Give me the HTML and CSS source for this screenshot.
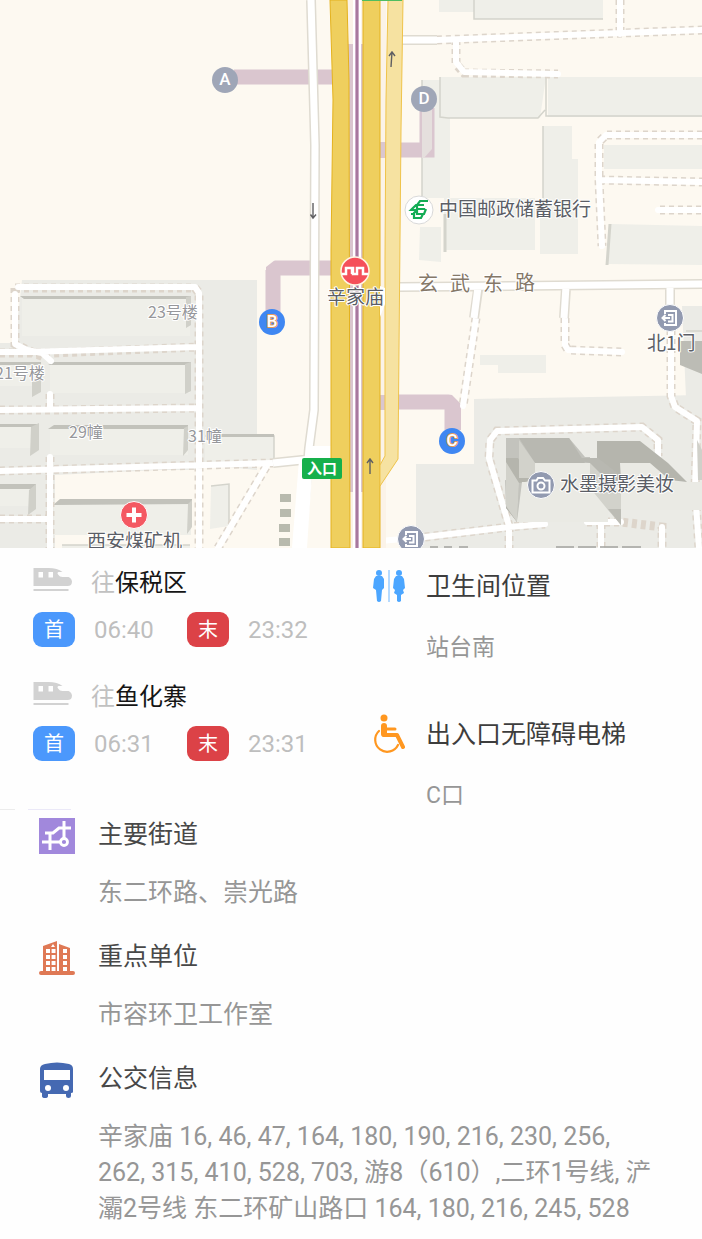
FILE: index.html
```html
<!DOCTYPE html>
<html lang="zh-CN">
<head>
<meta charset="utf-8">
<meta name="viewport" content="width=device-width, initial-scale=1">
<title>辛家庙</title>
<link rel="stylesheet" href="styles.css">
</head>
<body>
<svg class="symbols" aria-hidden="true">
  <symbol id="train" viewBox="0 0 39 24">
    <path fill="#d2d2d2" fill-rule="evenodd" d="M0 0H15Q24 0 29 4H25Q23 5 25 7Q26 9 29 9H35Q38 10 38.500 13.500Q38.500 18 34 18H0ZM5 4V9.500H9.500V4ZM15 4V9.500H19.500V4Z"/>
    <path stroke="#d2d2d2" stroke-width="2" d="M0 22H35"/>
  </symbol>
  <symbol id="gate" viewBox="0 0 28 28">
    <circle cx="14" cy="14" r="13.500" fill="#929ab0" stroke="#fff"/>
    <path fill="none" stroke="#fff" stroke-width="2" d="M9 10V7H20V21H9V19M12 11H16.500V17.500H12M6 14H14M9.500 11L6.500 14L9.500 17"/>
  </symbol>
</svg>

<main class="page">
<svg class="map" viewBox="0 0 702 548" role="img" aria-label="辛家庙站周边地图">
  <rect width="702" height="548" fill="#fdf9f1"/>

  <g fill="#ebebe6">
    <path d="M0 343H15L22 280H257V470L200 464V470H160L55 475V548H0Z"/>
    <path d="M474 399L702 395V548H416V464H474Z"/>
    <path d="M682 306H702V398H686Z"/>
  </g>
  <g fill="#efefe9">
    <path d="M439 0H474V12H439ZM474 0H603V19H474ZM422 80H440V118H450V198H422ZM440 77H546L540 118H440ZM548 77H702V117H548ZM543 126H572V159H578V254H540V210H543ZM444 198H535V250H444ZM420 227H441V262L419 260ZM604 145H702V169H604ZM611 224L702 226V265L607 264ZM480 355H546V373H498V365H480Z"/>
    <path d="M22 298H190V336H22ZM50 362H190V393H50ZM0 363H40V386H0ZM50 428H188V455H50ZM205 436H274V462H205ZM0 426H36V448H0ZM0 487H34V506H0ZM54 503H191V535H54ZM211 486L229 484V526L210 529ZM62 545H190V548H62Z"/>
  </g>
  <g fill="none" stroke="#d4d4cc" stroke-width="1.500">
    <path d="M474 0V19H603M440 77V117L448 118H538L545 110M546 77V116H702M543 126V198M422 80V196M686 331H702M205 436H274V461M211 486L229 484V526M62 545H190"/>
    <path stroke-width="3" d="M445 214V252M610 224L607 265"/>
  </g>
  <g fill="#c2c2bb">
    <path d="M20 296H191V299H24ZM48 365L54 362H191V365ZM0 362H41V365H0ZM48 429L54 425H188V429ZM0 424H39V427H0ZM0 484H36V489H0ZM53 505L60 499H192V504ZM205 434H274V437H222Z"/>
    <path fill="#d0d0c9" d="M186 297L191 296V325L186 328ZM185 364L191 362V391L185 394ZM32 380L41 375V392L32 397ZM184 428L188 426V450L183 456ZM31 427L39 423V450L30 456ZM29 490L36 484V509L28 515ZM188 504L192 500V527L187 534Z"/>
  </g>

  <g class="metro-passage">
    <path d="M234 77H335M273 312V268H335M380 150H427V108M380 402H452V430"/>
  </g>
  <path fill="#dac6cf" d="M457 397L461 402V430H450V397Z"/>
  <path fill="#e5dfdd" d="M422 108H432V149L424 158H422Z"/>
  <path fill="#fdf9f1" d="M445 393L452 395L463 406V393Z"/>
  <path fill="#fdf9f1" d="M264 260H275L266 267V270H264Z"/>

  <g class="lane-edge">
    <path d="M15 288H195L199 293V548M15 288V344L27 350L46 358M50 394V408M50 457V548M0 353H52L198 347M0 410H52L198 408M0 471L273 463M0 519H50M266 467L218 548"/>
    <path d="M437 40L702 30M620 0V34M456 40V64L464 73L558 74M702 135H606L599 142V180L602 246M600 180L702 182M660 210H702"/>
    <path d="M476 318L463 406M565 318V345L568 350L622 352M671 330V396L675 407L697 421L695 490L699 548M695 494H702"/>
    <path d="M509 526L489 458L490 440L497 431L642 427L658 440V456M425 537L509 527L545 524M587 522H621L662 527V548M509 527V548M601 524V548"/>
  </g>
  <g class="lane">
    <path d="M18 287H195L199 293V548M15 294V344L27 350L42 353L51 361M50 394V408M50 457V548M0 352H27L198 347M0 410L198 408M0 471L273 463M0 519H50M266 467L218 548"/>
    <path d="M437 40L702 30M620 0V34M456 40V62L464 72L558 74M702 135H606L599 142V180L602 246M600 180L702 182M658 210H702"/>
    <path d="M476 318L463 406M565 318V345L568 350L622 352M671 330V396L675 407L697 421L695 490L699 548M695 494H702"/>
    <path d="M509 526L489 458L490 440L497 431L642 427L658 440V456M380 541L425 537L509 527L545 524M587 522H621M509 527V548M601 524V548M662 527V548"/>
  </g>
  <g class="road-edge">
    <path d="M400 287L702 284M402 40H437M478 290L474 318M566 288L564 318M670 286V310M311 0L315 145L314 410L309 448L301 548M273 463L331 457"/>
  </g>
  <g class="road">
    <path d="M398 287L702 284M402 40H437M478 287L474 318M566 286L564 318M670 286V310M311 0L315 145L314 410L309 448L301 548M273 463L331 457"/>
    <path fill="#fff" stroke="none" d="M312 446H332V461H302ZM299 460H313L307 548H292Z"/>
  </g>

  <path fill="#c3c3bd" d="M506 438H569L585 457H590V463L621 509V525L582 478H535V482L525 480L517 522L506 508L505 480L519 483L506 463Z"/>
  <path fill="#b5b5ad" d="M506 458H518L531 481L519 483L517 522L506 508ZM597 441H640L668 463H620L621 480L597 460ZM642 458L668 463L687 482L670 480Z"/>
  <path fill="#b8b8b1" d="M519 438H569L585 463H535ZM570 458H598L620 475V485H590V463Z"/>
  <path fill="#d2d2cb" d="M506 462L519 483L517 522L506 506ZM519 440L535 463V478H519ZM621 463H648L662 478H621ZM590 463V480H570Z"/>
  <path fill="#eaeae4" d="M535 463H590V480L608 510V522H517L522 482H535ZM621 463H650L672 482H702V510H621Z"/>
  <path fill="#d2d2cb" d="M590 463L621 494V525L608 510L582 478H590Z"/>
  <path fill="#bcbcb5" d="M608 509H621V525ZM680 341H702V374L680 365Z"/>
  <path fill="#d0d0c9" d="M697 440L702 450V480H698Z"/>

  <path fill="#fbf3e8" d="M340 0H386V548H340Z"/>
  <path fill="#dac6cf" d="M346 44H364V492H346ZM380 142H387V158H380ZM380 395H386V410H380Z"/>
  <path fill="#f3deee" d="M354 0H361V548H354Z"/>
  <path fill="#fff" d="M353 0H355V548H353ZM359 0H361V548H359Z"/>
  <path fill="#a7799e" d="M355.500 0H358.500V548H355.500Z"/>
  <path class="highway" d="M330 0H347L349 80L350 548H331V250L333 100ZM363 0H380V548H363Z"/>
  <path class="ramp" d="M388 0H403L401 130L398 459L380 486V465L385 456V260L386 100Z"/>
  <path fill="#fff" d="M380 286L385 288V304L380 317Z"/>
  <path fill="#4fbd60" d="M362 0H402V1H362Z"/>
  <path fill="none" stroke="#5f5f62" stroke-width="1.400" d="M313 203V218M310.500 214.500L313 218L316 214.500M391 67L392 52M389 56L392 52L395 56M370 474V459M367 463L370 459L373 463"/>
  <path fill="#b8baae" d="M280 494H291V502H280ZM280 509H291V517H280ZM279 524H290V532H279ZM279 538H290V546H279Z"/>

  <g class="exit">
    <circle cx="225" cy="80" r="13" fill="#9fa6b7"/><text x="225" y="85">A</text>
    <circle cx="424" cy="99" r="13" fill="#9fa6b7"/><text x="424" y="104">D</text>
    <circle cx="272" cy="322" r="13" fill="#3f87f2"/><text class="exit-open" x="272" y="327">B</text>
    <circle cx="452" cy="441" r="13" fill="#3f87f2"/><text class="exit-open" x="452" y="446">C</text>
  </g>
  <rect x="302" y="458" width="40" height="21" rx="2" fill="#16b04b"/>
  <text class="entry" x="322" y="474">入口</text>

  <circle cx="355" cy="271" r="14" fill="#f5505a" stroke="#fff5e4" stroke-width="1.500"/>
  <path fill="none" stroke="#fff" stroke-width="2.500" d="M342 274H346V268H352V274M346 268H353V274H357V268H363V274H368"/>
  <circle cx="419" cy="210" r="14" fill="#fff" stroke="#d9d9d9"/>
  <path fill="none" stroke="#13ac55" stroke-width="2.200" d="M428 201H420L417 205V209H425M424 205H416L411 210H417V214H424L426 209M417 210L414 213V218H421L423 214M415 214H411"/>
  <circle cx="134" cy="515" r="13.500" fill="#f45862" stroke="#fff"/>
  <path stroke="#fff" stroke-width="4" d="M126.500 515H141.500M134 507.500V522.500"/>
  <circle cx="541" cy="485" r="13.500" fill="#929ab0" stroke="#fff"/>
  <path fill="none" stroke="#fff" stroke-width="2" d="M532.500 480.500H536.500L538 478H543L545 480.500H549.500V492.500H532.500Z"/>
  <circle cx="541" cy="486" r="3.500" fill="none" stroke="#fff" stroke-width="2"/>
  <use href="#gate" x="656" y="304" width="28" height="28"/>
  <use href="#gate" x="397" y="525" width="28" height="28"/>

  <g class="place">
    <text x="439" y="216">中国邮政储蓄银行</text>
    <text x="327" y="304">辛家庙</text>
    <text x="560" y="491">水墨摄影美妆</text>
    <text x="87" y="548">西安煤矿机</text>
    <text x="647" y="350">北1门</text>
  </g>
  <text class="street" x="418 450 483 515" y="291 291 291 290">玄武东路</text>
  <g class="block">
    <text x="148" y="318">23号楼</text>
    <text x="-5" y="379">21号楼</text>
    <text x="69" y="438">29幢</text>
    <text x="188" y="442">31幢</text>
  </g>
  <path stroke="#a2a39f" stroke-width="1.500" d="M556 547H574M578 547H596M600 547H618M622 547H641M430 547H438M444 547H452M459 547H468"/>
</svg>

<section class="summary">
  <div class="routes">
    <div class="route">
      <h2 class="route-title"><svg class="train"><use href="#train"/></svg><span><span class="toward">往</span>保税区</span></h2>
      <div class="times"><span class="badge first">首</span><time>06:40</time><span class="badge last">末</span><time>23:32</time></div>
    </div>
    <div class="route">
      <h2 class="route-title"><svg class="train"><use href="#train"/></svg><span><span class="toward">往</span>鱼化寨</span></h2>
      <div class="times"><span class="badge first">首</span><time>06:31</time><span class="badge last">末</span><time>23:31</time></div>
    </div>
  </div>
  <div class="facilities">
    <article class="facility">
      <svg class="facility-icon" viewBox="0 0 32 40" aria-hidden="true">
        <g fill="#4ca6ff"><circle cx="6" cy="7" r="3"/><circle cx="26" cy="7" r="3"/>
        <path d="M3 10H9L11 13V22L9 24L8 35Q6 37 4 35L3 24L0 22L1 13ZM23 10H29L31 13L32 22L30 24L31 27L28 29V35Q26 37 24 35V29L21 27L22 24L20 22L21 13Z"/></g>
        <path stroke="#84c1ff" stroke-width="1.200" d="M16 4V36"/>
      </svg>
      <div><h2>卫生间位置</h2><p>站台南</p></div>
    </article>
    <article class="facility">
      <svg class="facility-icon" viewBox="0 0 32 40" aria-hidden="true">
        <circle cx="11" cy="4" r="3.500" fill="#ff9720"/>
        <path fill="none" stroke="#ff9720" stroke-width="6" stroke-linecap="round" stroke-linejoin="round" d="M11 12V20"/>
        <path fill="none" stroke="#ff9720" stroke-width="3" stroke-linecap="round" stroke-linejoin="round" d="M12 15H22"/>
        <path fill="none" stroke="#ff9720" stroke-width="4" stroke-linecap="round" stroke-linejoin="round" d="M11 21H24L30 33"/>
        <path fill="none" stroke="#ff9720" stroke-width="2.200" stroke-linecap="round" d="M6 17A12 12 0 1 0 25 31"/>
      </svg>
      <div><h2>出入口无障碍电梯</h2><p>C口</p></div>
    </article>
  </div>
</section>

<div class="rule" aria-hidden="true"><i class="rule-edge"></i><i class="rule-tab"></i></div>

<section class="details">
  <article class="detail">
    <svg class="detail-icon" viewBox="0 0 36 36" aria-hidden="true">
      <path fill="#a188dc" d="M0 0H36V36H0Z"/>
      <path fill="none" stroke="#fff" stroke-width="3" d="M3 24H22M11 32V15M6 15H14L20 10H32M25 3V20"/>
      <circle cx="25" cy="24" r="3.500" fill="#a188dc" stroke="#fff" stroke-width="2.800"/>
    </svg>
    <div><h2>主要街道</h2><p>东二环路、崇光路</p></div>
  </article>
  <article class="detail">
    <svg class="detail-icon" viewBox="0 0 36 36" aria-hidden="true">
      <path fill="#df7955" d="M4 6L18 1V31H20V4L31 8V31H34Q36 31 36 33T34 35H2Q0 35 0 33T2 31H4Z"/>
      <path stroke="#fff" stroke-width="4" stroke-dasharray="4 2" d="M9 9V31M14.500 9V31M26 9V31"/>
      <path stroke="#df7955" d="M11.700 8V31"/>
      <path fill="#fff" d="M12 7L14 4L16 7Z"/>
    </svg>
    <div><h2>重点单位</h2><p>市容环卫工作室</p></div>
  </article>
  <article class="detail">
    <svg class="detail-icon" viewBox="0 0 36 36" aria-hidden="true">
      <path fill="#4569b2" d="M1 7Q1 3 6 2Q18 -1 30 2Q34 3 34 7V30Q34 31 32 31V34Q32 36 29.500 36T27 34V32H9V34Q9 36 6 36T3 34V31Q1 31 1 29Z"/>
      <path fill="#fff" d="M5 8H31V18H5Z"/><circle cx="9" cy="26" r="3" fill="#fff"/><circle cx="27" cy="26" r="3" fill="#fff"/>
    </svg>
    <div><h2>公交信息</h2><p>辛家庙 16, 46, 47, 164, 180, 190, 216, 230, 256, 262, 315, 410, 528, 703, 游8（610）,二环1号线, 浐灞2号线 东二环矿山路口 164, 180, 216, 245, 528</p></div>
  </article>
</section>
</main>
</body>
</html>
```
FILE: styles.css
```css
* { box-sizing: border-box; }
body {
  margin: 0;
  background: #fefefe;
  color: #3d3d3d;
  font-family: Roboto, "Noto Sans CJK SC", sans-serif;
}
h2, p { margin: 0; font-weight: 400; }
.symbols { display: none; }

.map { display: block; width: 100%; height: auto; }
.metro-passage { fill: none; stroke: #dac6cf; stroke-width: 15; }
.lane-edge { fill: none; stroke: #ddd5cb; stroke-width: 9; stroke-dasharray: 5 4; }
.lane { fill: none; stroke: #fff; stroke-width: 6; stroke-linejoin: round; stroke-linecap: round; }
.road-edge { fill: none; stroke: #dfdbd1; stroke-width: 10; }
.road { fill: none; stroke: #fff; stroke-width: 7; }
.highway { fill: #efcf5e; stroke: #e4b21e; stroke-width: 1; }
.ramp { fill: #f6e2a1; stroke: #efc34a; stroke-width: 1; }
.map text { font-family: "Noto Sans CJK SC", sans-serif; paint-order: stroke; stroke-linejoin: round; }
.map .exit text { font: 500 17px Roboto, sans-serif; fill: #fff; text-anchor: middle; }
.map .exit .exit-open { stroke: #e69b5a; stroke-width: 2; }
.map .entry { font-size: 15px; font-weight: 700; fill: #fff; text-anchor: middle; }
.place { font-size: 19px; fill: #5b5e66; stroke: #fff; stroke-width: 2; }
.street { font-size: 20px; fill: #857868; stroke: #fff; stroke-width: 2; }
.block { font-size: 16px; fill: #96979b; stroke: #fff; stroke-width: 2; }

.summary {
  display: grid;
  grid-template-columns: 340fr 329fr;
  padding: 18px 0 0 33px;
}
.route + .route { margin-top: 33px; }
.route-title {
  display: flex;
  align-items: center;
  gap: 18px;
  margin-bottom: 12px;
  color: #151515;
  font-size: 24px;
  line-height: 34px;
}
.train { width: 40px; height: 24px; margin-bottom: 6px; }
.toward { color: #c1c1c1; }
.times { display: flex; align-items: center; }
.badge {
  width: 42px;
  padding-top: 1px;
  border-radius: 9px;
  color: #fff;
  font-size: 20px;
  line-height: 34px;
  text-align: center;
}
.first { background: #4b98fc; }
.last { background: #dc4247; }
time { width: 93px; margin-left: 19px; color: #bebebe; font-size: 24px; }
.badge.last { margin-left: 0; }

.facilities { padding-top: 4px; }
.facility { display: flex; align-items: flex-start; gap: 21px; }
.facility + .facility { margin-top: 54px; }
.facility-icon { flex: none; width: 32px; height: 40px; margin-top: -4px; }
.facility h2 { font-size: 25px; line-height: 34px; }
.facility p { margin-top: 28px; color: #969696; font-size: 23px; line-height: 32px; }

.rule { display: flex; gap: 13px; height: 8px; margin-top: -3px; }
.rule i { height: 1px; }
.rule-edge { width: 15px; background: #ececec; }
.rule-tab { width: 43px; background: #ebe9f8; }

.details { padding: 0 48px 11px 39px; }
.detail { display: flex; align-items: flex-start; gap: 23px; }
.detail + .detail { margin-top: 28px; }
.detail-icon { flex: none; width: 36px; height: 36px; margin-top: 1px; }
.detail h2 { color: #484848; font-size: 25px; line-height: 36px; }
.detail p { margin-top: 22px; color: #969696; font-size: 25px; line-height: 36px; }
```
